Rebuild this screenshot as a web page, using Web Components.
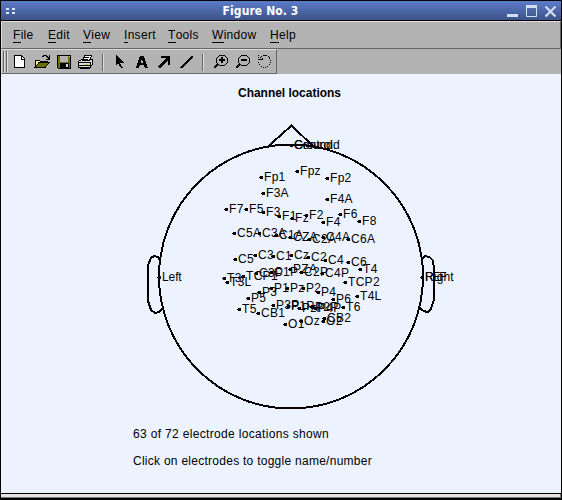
<!DOCTYPE html>
<html lang="en"><head><meta charset="utf-8"><title>Figure No. 3</title>
<style>html,body{margin:0;width:562px;height:500px;overflow:hidden;background:#000;font-family:"Liberation Sans",Arial,sans-serif;font-size:12px;color:#000}</style></head>
<body><figure-window></figure-window>
<script>
class Base extends HTMLElement{
  draw(h){this.attachShadow({mode:'open'}).innerHTML=h;}
}
customElements.define('title-bar',class extends Base{constructor(){super();this.draw(`<style>
:host{display:flex;height:19px;box-sizing:border-box;align-items:center;background:linear-gradient(#5b7cc8,#3d5388);color:#fff;padding:0 4px 0 5px}
.t{flex:1;text-align:center;font:bold 12px/18px "DejaVu Sans Condensed","DejaVu Sans",sans-serif;padding-right:2px;letter-spacing:.1px;white-space:nowrap}
svg{display:block}</style>
<svg width="10" height="8" fill="#dfe6f5" shape-rendering="crispEdges"><path d="M0 1h3v2H0zM6 1h3v2H6zM0 5h3v2H0zM6 5h3v2H6z"/></svg>
<div class="t"><slot></slot></div>
<svg width="50" height="14" fill="none" stroke="#d3def5"><path d="M0 11.5h11" stroke-width="3"/><path d="M19.5 2.5v10h10v-10z" stroke-width="1"/><path d="M19 2.5h11" stroke-width="3"/><path d="M38.5 2.5l10 10M48.5 2.5l-10 10" stroke-width="2.2"/></svg>`)}});
customElements.define('menu-item',class extends Base{constructor(){super();this.draw(`<style>
:host{display:block;line-height:14px;white-space:nowrap;letter-spacing:.3px}
span{display:inline-block;height:14px;border-bottom:1px solid #000}</style><span><slot name="key"></slot></span><slot></slot>`)}});
customElements.define('menu-bar',class extends Base{constructor(){super();this.draw(`<style>
:host{display:grid;grid-template-columns:35px 35px 41px 44px 44px 58px 1fr;height:28px;box-sizing:border-box;padding:6px 0 0 11px;background:#b3b3b3;border-top:1px solid #ddd;border-left:1px solid #ddd;border-right:1px solid #666;border-bottom:1px solid #666}</style><slot></slot>`)}});
const icons={
new:'<path d="M5.5 4.5h7l3 3v9h-10z" fill="#fff" stroke="#000"/><path d="M12.5 4v4H16" fill="none" stroke="#000"/>',
open:'<path d="M4 9h4l1 1h7v3H8l-4 4z" fill="#ffff80" stroke="#000"/><path d="M4 16.5l4-5h10l-4 5z" fill="#707000" stroke="#000"/><path d="M11 5.5h1l1-1h2l3 3M18.5 4v4H15" fill="none" stroke="#000"/>',
save:'<path d="M4.5 4.5h13v13h-12l-1-1z" fill="#707000" stroke="#000"/><path d="M7 5h8v6H7z" fill="#b3b3b3"/><path d="M7 12h9v5H7z"/><path d="M13 13h2v3h-2z" fill="#ddd"/><path d="M16 5h1v1h-1z" fill="#ddd"/>',
print:'<path d="M3.500 10.500l3-2h11v5l-3 3h-11z" fill="#ddd" stroke="#000"/><path d="M7.500 9.500l2-5h7l-2 5z" fill="#fff" stroke="#000"/><path d="M9 6.500h5M8 8.500h5M3 11.500h12M3 14.500h12M15.500 11v6M5 17.500h10" stroke="#000"/><path d="M10 13h3v1h-3z" fill="#cc0"/>',
select:'<path d="M7 4l8 8h-4l3 5h-2l-3-5-2 2z"/>',
text:'<path d="M9 5h4l4 12h-3l-1-3H9l-1 3H5zM11 7l-1 5h2z" fill-rule="evenodd"/>',
arrow:'<path d="M8 5h9v9h-2V9l-8 8-2-1v-1l8-8H8z"/>',
line:'<path d="M16 5h2v1L7 17H5v-1z"/>',
zin:'<circle cx="13" cy="9.500" r="5.500" fill="none" stroke="#000"/><path d="M9 13l-4 4" stroke="#000" stroke-width="2"/><path d="M10 8h6v2h-6zM12 6h2v6h-2z"/>',
zout:'<circle cx="13" cy="9.500" r="5.500" fill="none" stroke="#000"/><path d="M9 13l-4 4" stroke="#000" stroke-width="2"/><path d="M10 8h6v2h-6z"/>',
rotate:'<path d="M5 4h1v1H5zM5 6h1v1H5zM5 8h5v1H5zM9 7h1v1H9zM7 6h1v1H7zM8 5h1v1H8zM10 4h4v1h-4zM15 5h1v1h-1zM16 6h1v2h-1zM17 9h1v1h-1zM17 11h1v1h-1zM16 13h1v1h-1zM14 15h1v1h-1zM12 16h1v1h-1zM10 16h1v1h-1zM8 15h1v1H8zM6 13h1v1H6zM5 11h1v1H5z"/>'};
customElements.define('tool-icon',class extends Base{constructor(){super();this.draw(`<style>:host{display:block;width:22px;height:22px}svg{display:block}</style><svg width="22" height="22" shape-rendering="crispEdges">${icons[this.getAttribute('name')]}</svg>`)}});
customElements.define('tool-sep',class extends Base{constructor(){super();this.draw(`<style>:host{display:flex;width:12px;height:22px;justify-content:center;align-items:center}i{width:1px;height:17px;background:#666;border-right:1px solid #ddd}</style><i></i>`)}});
const ti=a=>a.split(' ').map(n=>n=='|'?'<tool-sep></tool-sep>':`<tool-icon name="${n}"></tool-icon>`).join('');
customElements.define('tool-bar',class extends Base{constructor(){super();this.draw(`<style>
:host{display:flex;height:25px;background:#b3b3b3}
.b{display:flex;box-sizing:border-box;width:276px;height:25px;padding-top:1px;border-top:1px solid #ddd;border-left:1px solid #ddd;border-right:1px solid #666;border-bottom:1px solid #666}
.g{width:7px;height:21px;box-sizing:border-box;display:flex;gap:1px;padding-left:1px}.g i{width:1px;background:#666;border-right:1px solid #ddd}</style>
<div class="b"><div class="g"><i></i><i></i></div>${ti('new open save print | select text arrow line | zin zout rotate')}</div>`)}});
const electrodes=[['Fp1',261,177],['Fpz',297,171],['Fp2',327,178],['F3A',263,193],['F4A',327,199],['F7',226,209],['F5',246,209],['F3',263,212],['F1',279,216],['Fz',292,218],['F2',306,215],['F4',323,222],['F6',340,214],['F8',359,221],['C5A',234,233],['C3A',259,233],['C1A',276,235],['CZA',290,237],['C2A',309,239],['C4A',323,237],['C6A',348,239],['C5',235,259],['C3',255,255],['C1',273,256],['Cz',291,255],['C2',308,257],['C4',325,260],['C6',348,262],['T3',224,278],['T3L',227,282],['TCP1',243,276],['C3P',256,273],['C1P',271,272],['PZA',290,269],['C2P',301,272],['C4P',322,273],['T4',360,269],['TCP2',345,282],['P5',248,298],['P3',259,292],['P1',271,288],['Pz',287,288],['P2',303,288],['P4',318,292],['P6',333,299],['T4L',357,296],['T5',239,309],['CB1',258,313],['P3P',273,305],['P1P',288,306],['PzP',299,308],['P2P',312,307],['P4P',315,308],['T6',343,307],['O1',285,324],['Oz',301,321],['O2',323,321],['CB2',324,318],['Left',159,277],['Right',422,277],['REF',422,277],['Ground',291,145],['Centroid',291,145]];
customElements.define('head-plot',class extends Base{constructor(){super();
const widths={Left:20,Right:29,REF:22,Ground:39,Centroid:46};
const e=electrodes.map(([n,x,y])=>`<path d="M${x-1} ${y-1}h3v3h-3zM${x-2} ${y}h1v1h-1z"/><text x="${x+3}" y="${y+4}"${widths[n]?` textLength="${widths[n]}"`:''}>${n}</text>`).join('');
this.draw(`<style>:host{display:block;height:419px;background:#ecf3ff}svg{display:block}text{font-family:"Liberation Sans",Arial,sans-serif;font-size:12px;letter-spacing:.3px;fill:#000}</style>
<svg width="560" height="419" viewBox="1 74 560 419"><text x="238" y="97" font-weight="bold" textLength="103" lengthAdjust="spacingAndGlyphs" style="letter-spacing:0">Channel locations</text>
<g fill="none" stroke="#000" stroke-width="2" shape-rendering="crispEdges"><circle cx="291" cy="276.500" r="132"/><path d="M267.500 147L291.500 125.500 315 148"/>
<path d="M160 260l-2-3-4-1-3 2-3 7v36l3 9 4 3 4-1 4-4M421.500 260l3-4 5 1 3 3 1 5v36l-3 9-3 2-4-1-3.500-3"/></g>${e}
<text x="133" y="438" textLength="196">63 of 72 electrode locations shown</text><text x="133" y="465" textLength="239">Click on electrodes to toggle name/number</text></svg>`)}});
const items=['File','Edit','View','Insert','Tools','Window','Help'];
customElements.define('figure-window',class extends Base{constructor(){super();this.draw(`<style>
:host{display:flex;flex-direction:column;box-sizing:border-box;width:562px;height:500px;padding:1px;background:#000}
menu-bar{margin-top:1px}.foot{height:4px;margin-top:1px;box-sizing:border-box;background:#e8e4e4;border-bottom:1px solid #777;border-right:1px solid #777}</style>
<title-bar>Figure No. 3</title-bar><menu-bar>${items.map(s=>`<menu-item><span slot="key">${s[0]}</span>${s.slice(1)}</menu-item>`).join('')}</menu-bar><tool-bar></tool-bar><head-plot></head-plot><div class="foot"></div>`)}});
</script></body></html>
